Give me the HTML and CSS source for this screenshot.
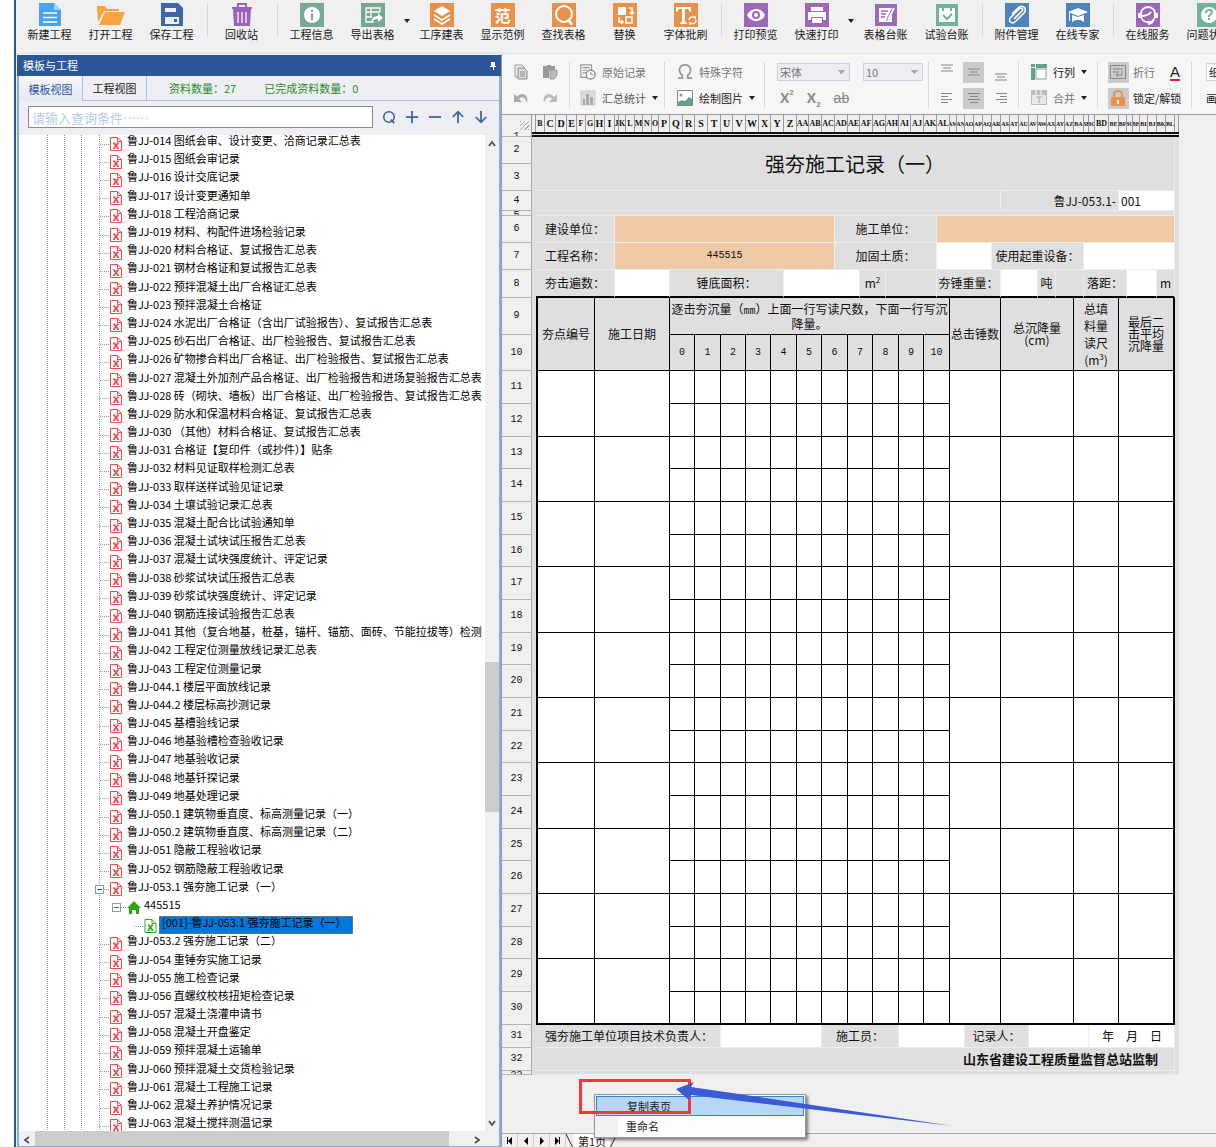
FILE: index.html
```html
<!DOCTYPE html>
<html lang="zh-CN">
<head>
    <meta charset="UTF-8">
    <meta name="viewport" content="width=device-width, initial-scale=1.0">
    <title>强夯施工记录</title>
    <link rel="stylesheet" href="styles.css">
</head>
<body>
    <!-- Icons -->
    <svg class="sprite" aria-hidden="true">
        <symbol id="i-new" viewBox="0 0 24 24"><path fill="#4aa3ef" d="M1 0h15l7 7v16H1z"/><path fill="#a8d3fa" d="M16 0l7 7h-7z"/><path stroke="#fff" stroke-width="1.4" d="M5 10h14M5 14.500h14M5 19h14"/></symbol>
        <symbol id="i-open" viewBox="0 0 28 24"><path fill="#fba33f" d="M0 3h8l2 3h12v2H7L1 19z"/><path fill="#fba33f" d="M8 9h20l-5 13H2z"/></symbol>
        <symbol id="i-save" viewBox="0 0 24 24"><path fill="#3d67ab" d="M1 0h17l5 5v18H1z"/><path fill="#f0f0f0" d="M5 5h11v4H5zM5 14h14v7H5z"/><path fill="#3d67ab" d="M14 16h3v3h-3z"/></symbol>
        <symbol id="i-trash" viewBox="0 0 24 24"><path fill="none" stroke="#9a63b5" stroke-width="2" d="M2 5h20M8 4V1h8v3"/><path fill="#9a63b5" d="M3 6h18l-1 17H4z"/><path stroke="#f0e4f5" stroke-width="1.500" d="M8 9v11M12 9v11M16 9v11"/></symbol>
        <symbol id="i-info" viewBox="0 0 24 24"><path fill="#78a793" d="M0 0h24v24H0z"/><circle cx="12" cy="12" r="8" fill="#fff"/><path stroke="#78a793" stroke-width="2.200" d="M12 10.500V17M12 7v2"/></symbol>
        <symbol id="i-export" viewBox="0 0 24 24"><path fill="#78a793" d="M0 0h24v24H0z"/><path fill="none" stroke="#fff" stroke-width="1.300" d="M19 9V5H5v14h8M5 9h14M5 14h6M10 5v9"/><path fill="#fff" d="M10 19c1-4 3-6 7-6v-3l5 5-5 4v-3c-3 0-5 1-7 3z"/></symbol>
        <symbol id="i-layers" viewBox="0 0 24 24"><path fill="#e8914a" d="M0 0h24v24H0z"/><path fill="#fff" d="M12 3l8 5-8 5-8-5zM4 11l8 5 8-5v2l-8 5-8-5zM4 15l8 5 8-5v2l-8 5-8-5z"/></symbol>
        <symbol id="i-search" viewBox="0 0 24 24"><path fill="#e8914a" d="M0 0h24v24H0z"/><circle cx="12" cy="11" r="8" fill="none" stroke="#fff" stroke-width="2"/><path stroke="#fff" stroke-width="2.400" d="M16 16l4 6"/></symbol>
        <symbol id="i-replace" viewBox="0 0 24 24"><path fill="#e8914a" d="M0 0h24v24H0z"/><path fill="#fff" d="M5 4h8v8H5z"/><path fill="none" stroke="#fff" stroke-width="1.600" d="M13 14h6v6h-6zM16 5h3v6M17 9l2 2 2-2M6 14v5h4M8 17l2 2-2 2"/></symbol>
        <symbol id="i-font" viewBox="0 0 24 24"><path fill="#e8914a" d="M0 0h24v24H0z"/><path fill="#fff" d="M2 4h15v5h-1l-2-3h-3v13l2 1v1H6v-1l2-1V6H5L3 9H2z"/><path fill="none" stroke="#fff" stroke-width="1.400" d="M15 17c0-3 4-4 6-2v-2M22 17c0 4-4 4-6 3v2"/></symbol>
        <symbol id="i-eye" viewBox="0 0 24 24"><path fill="#9b69b8" d="M0 0h24v24H0z"/><path fill="#fff" d="M3 12c4-8 14-8 18 0-4 8-14 8-18 0z"/><circle cx="12" cy="12" r="3" fill="#fff" stroke="#9b69b8" stroke-width="2"/></symbol>
        <symbol id="i-print" viewBox="0 0 24 24"><path fill="#9b69b8" d="M0 0h24v24H0z"/><path fill="#fff" d="M6 4h12v4H6zM3 9h18v8h-3v-3H6v3H3zM7 15h10v5H7z"/></symbol>
        <symbol id="i-form" viewBox="0 0 24 24"><path fill="#9b69b8" d="M1 1h22v22H1z"/><path fill="#fff" d="M5 5h13l-5 10-1 3 3-1 3-6v8H5z"/><path stroke="#9b69b8" stroke-width="1.300" d="M7 8h7M7 11h5M7 14h4"/><path stroke="#fff" stroke-width="2" d="M20 5l-6 12"/></symbol>
        <symbol id="i-test" viewBox="0 0 24 24"><path fill="#6fb39a" d="M1 1h22v22H1z"/><path fill="#fff" d="M4 5h3v3h2V5h6v3h2V5h3v14H4z"/><path fill="none" stroke="#6fb39a" stroke-width="2" d="M8 12l4 4 5-5"/></symbol>
        <symbol id="i-clip" viewBox="0 0 24 24"><path fill="#4c84bb" d="M0 0h24v24H0z"/><path fill="none" stroke="#fff" stroke-width="1.600" d="M9 16l8-8c2-2-1-4-3-2l-8 8c-4 4 1 8 5 4l8-8c4-5-2-9-6-5l-6 6"/></symbol>
        <symbol id="i-expert" viewBox="0 0 24 24"><path fill="#4c84bb" d="M0 0h24v24H0z"/><path fill="#fff" d="M12 5l10 4-10 4L2 9z"/><path fill="#fff" d="M6 12l6 2 6-2v7c-4-3-8-3-12 0zM3 10h1v8H3z"/></symbol>
        <symbol id="i-service" viewBox="0 0 24 24"><path fill="#9b69b8" d="M0 0h24v24H0z"/><path fill="none" stroke="#fff" stroke-width="1.800" d="M5 13C3 1 21 1 19 13c-1 8-13 8-14 0c5 0 8-1 10-4M18 16c-1 3-3 5-6 5"/><path fill="#fff" d="M2 10h3v5H2zM19 10h3v5h-3z"/></symbol>
        <symbol id="i-help" viewBox="0 0 24 24"><path fill="#6fb39a" d="M0 0h24v24H0z"/><circle cx="12" cy="12" r="8" fill="#fff"/><path fill="none" stroke="#6fb39a" stroke-width="2" d="M9 10c0-4 6-4 6-1 0 2-3 2-3 5M12 15v2"/></symbol>
        <symbol id="i-copy" viewBox="0 0 16 16"><path fill="#eee" stroke="#999" d="M2 1h7l2 2v10H2z"/><path fill="#ddd" stroke="#888" d="M5 4h6l3 3v8H5z"/><path stroke="#888" d="M7 8h5M7 10h5M7 12h5"/></symbol>
        <symbol id="i-paste" viewBox="0 0 16 16"><path fill="#999" d="M1 2h4V1h4v1h4v4H7v8H1z"/><path fill="#bbb" stroke="#999" d="M8 6h7v5l-3 4H8z"/></symbol>
        <symbol id="i-undo" viewBox="0 0 16 16"><path fill="#aaa" d="M1 4v8h8L6 9c3-3 6-2 8 4C16 5 9 1 4 7z"/></symbol>
        <symbol id="i-redo" viewBox="0 0 16 16"><path fill="#bbb" d="M15 4v8H7l3-3C7 6 4 7 2 13 0 5 7 1 12 7z"/></symbol>
        <symbol id="i-record" viewBox="0 0 18 18"><path fill="none" stroke="#999" stroke-width="1.300" d="M8 15H1V1h12v6M3 4h8M3 7h5M3 10h4"/><circle cx="12" cy="12" r="5" fill="#f6f6f6" stroke="#888" stroke-width="1.400"/><path fill="none" stroke="#888" d="M12 9v3h3"/></symbol>
        <symbol id="i-stats" viewBox="0 0 16 16"><path fill="#ddd" stroke="#ccc" d="M1 1h14v14H1z"/><path fill="#aaa" d="M3 9h2v6H3zM6 4h3v11H6zM10 7h3v8h-3z"/></symbol>
        <symbol id="i-omega" viewBox="0 0 18 18"><path fill="none" stroke="#999" stroke-width="2" d="M1 16h5v-3C0 8 3 1 9 1s9 7 3 12v3h5"/></symbol>
        <symbol id="i-picture" viewBox="0 0 16 16"><path fill="#fff" stroke="#888" d="M.5.5h15v15H.5z"/><path fill="#5fa38c" d="M1 12l4-2 3 1 4-4 3 2v6H1z"/><circle cx="4" cy="5" r="1.500" fill="#e77b26"/></symbol>
        <symbol id="i-top" viewBox="0 0 12 9"><path stroke="#888" d="M0 1.500h12M2 4.500h8M0 7.500h12"/></symbol>
        <symbol id="i-left" viewBox="0 0 12 12"><path stroke="#888" d="M0 1.500h11M0 4.500h7M0 7.500h11M0 10.500h7"/></symbol>
        <symbol id="i-center" viewBox="0 0 12 12"><path stroke="#888" d="M0 1.500h12M2 4.500h8M0 7.500h12M2 10.500h8"/></symbol>
        <symbol id="i-right" viewBox="0 0 12 12"><path stroke="#888" d="M1 1.500h11M5 4.500h7M1 7.500h11M5 10.500h7"/></symbol>
        <symbol id="i-rowcol" viewBox="0 0 16 16"><path fill="#fff" stroke="#999" d="M5 5h10v10H5z"/><path fill="#5fa38c" d="M0 0h4v3H0zM5 0h11v4H5zM0 4h4v12H0z"/></symbol>
        <symbol id="i-merge" viewBox="0 0 16 16"><path fill="#e8e8e8" stroke="#bbb" d="M.5.5h15v14H.5z"/><path fill="#bbb" d="M0 0h16v5H0z"/><path stroke="#fff" d="M5 0v5M10 0v5"/><path stroke="#aaa" d="M5 7h6M8 7v6"/></symbol>
        <symbol id="i-wrap" viewBox="0 0 16 16"><path fill="none" stroke="#888" d="M.5 1.500h15v13H.5zM3 5h10M3 8h6M12 7v4H6M8 9l-2 2 2 2"/></symbol>
        <symbol id="i-lock" viewBox="0 0 16 16"><path fill="none" stroke="#e8914a" stroke-width="2" d="M4 8V4c0-4 8-4 8 0v4"/><path fill="#e8914a" d="M1 7h14v9H1z"/><path fill="#fff" d="M7 10h2v4H7z"/></symbol>
        <symbol id="i-find" viewBox="0 0 16 16"><circle cx="8" cy="8" r="6" fill="none" stroke="#3b64a5" stroke-width="1.800"/><path stroke="#3b64a5" stroke-width="2" d="M10 11l4 4"/></symbol>
        <symbol id="i-plus" viewBox="0 0 16 16"><path stroke="#3b64a5" stroke-width="2" d="M1 8h14M8 1v14"/></symbol>
        <symbol id="i-minus" viewBox="0 0 16 16"><path stroke="#3b64a5" stroke-width="2" d="M1 8h14"/></symbol>
        <symbol id="i-up" viewBox="0 0 16 16"><path fill="none" stroke="#3b64a5" stroke-width="2" d="M8 15V2M2 8l6-6 6 6"/></symbol>
        <symbol id="i-down" viewBox="0 0 16 16"><path fill="none" stroke="#3b64a5" stroke-width="2" d="M8 1v13M2 8l6 6 6-6"/></symbol>
        <symbol id="i-pin" viewBox="0 0 8 8"><path fill="#fff" d="M2 0h4v4h1v1H5v3H4V5H1V4h1z"/></symbol>
        <symbol id="i-doc" viewBox="0 0 12 14"><path fill="#fff" stroke="currentColor" d="M.5.5h7l4 4v9H.5z"/><path fill="none" stroke="currentColor" d="M7.500.5v4h4"/><path stroke="currentColor" stroke-width="1.800" d="M4 6l4 5M8 6l-4 5"/><path stroke="currentColor" d="M3 6h2M7 6h2M3 11.500h2M7 11.500h2"/></symbol>
        <symbol id="i-home" viewBox="0 0 14 13"><path fill="#2fa60e" d="M7 0l7 7h-2v6H9V9H5v4H2V7H0z"/></symbol>
        <symbol id="i-chev" viewBox="0 0 8 8"><path fill="none" stroke="#555" stroke-width="1.800" d="M1 6l3-4 3 4"/></symbol>
    </svg>

    <div class="app">
        <!-- Main toolbar -->
        <header class="topbar">
            <button><svg><use href="#i-new"/></svg>新建工程</button>
            <button><svg class="wide"><use href="#i-open"/></svg>打开工程</button>
            <button><svg><use href="#i-save"/></svg>保存工程</button>
            <i class="sep"></i>
            <button><svg><use href="#i-trash"/></svg>回收站</button>
            <i class="sep"></i>
            <button><svg><use href="#i-info"/></svg>工程信息</button>
            <button><svg><use href="#i-export"/></svg>导出表格</button>
            <i class="drop"></i>
            <button><svg><use href="#i-layers"/></svg>工序建表</button>
            <button><b class="word-icon">范</b>显示范例</button>
            <button><svg><use href="#i-search"/></svg>查找表格</button>
            <button><svg><use href="#i-replace"/></svg>替换</button>
            <button><svg><use href="#i-font"/></svg>字体批刷</button>
            <i class="sep"></i>
            <button><svg><use href="#i-eye"/></svg>打印预览</button>
            <button><svg><use href="#i-print"/></svg>快速打印</button>
            <i class="drop"></i>
            <button><svg><use href="#i-form"/></svg>表格台账</button>
            <button><svg><use href="#i-test"/></svg>试验台账</button>
            <i class="sep"></i>
            <button><svg><use href="#i-clip"/></svg>附件管理</button>
            <button><svg><use href="#i-expert"/></svg>在线专家</button>
            <i class="sep"></i>
            <button><svg><use href="#i-service"/></svg>在线服务</button>
            <button><svg><use href="#i-help"/></svg>问题状态</button>
        </header>

        <main>
            <!-- Template tree -->
            <aside class="side">
                <div class="side-title">模板与工程<svg><use href="#i-pin"/></svg></div>
                <div class="tabs">
                    <button class="tab active">模板视图</button>
                    <button class="tab">工程视图</button>
                    <span class="count">资料数量：27</span>
                    <span class="count">已完成资料数量：0</span>
                </div>
                <div class="search">
                    <input type="text" placeholder="请输入查询条件……" aria-label="查询条件">
                    <button aria-label="查询"><svg><use href="#i-find"/></svg></button>
                    <button aria-label="展开"><svg><use href="#i-plus"/></svg></button>
                    <button aria-label="收起"><svg><use href="#i-minus"/></svg></button>
                    <button aria-label="上一个"><svg><use href="#i-up"/></svg></button>
                    <button aria-label="下一个"><svg><use href="#i-down"/></svg></button>
                </div>
                <div class="tree-box">
                    <ul class="tree" id="tree"></ul>
                    <div class="vscroll"><svg><use href="#i-chev"/></svg><i></i><svg class="flip"><use href="#i-chev"/></svg></div>
                </div>
                <div class="hscroll"><svg class="turn-left"><use href="#i-chev"/></svg><i></i><svg class="turn-right"><use href="#i-chev"/></svg></div>
            </aside>

            <section class="editor">
                <!-- Edit toolbar -->
                <div class="ribbon">
                    <div class="group clipboard">
                        <div><button aria-label="复制"><svg><use href="#i-copy"/></svg></button><button aria-label="粘贴"><svg><use href="#i-paste"/></svg></button></div>
                        <div><button aria-label="撤销"><svg><use href="#i-undo"/></svg></button><button aria-label="恢复"><svg><use href="#i-redo"/></svg></button></div>
                    </div>
                    <div class="group record-tools">
                        <div><button class="off"><svg><use href="#i-record"/></svg>原始记录</button></div>
                        <div><button class="off dark"><svg><use href="#i-stats"/></svg>汇总统计<i class="drop"></i></button></div>
                    </div>
                    <div class="group symbol">
                        <div><button class="off"><svg><use href="#i-omega"/></svg>特殊字符</button></div>
                        <div><button><svg><use href="#i-picture"/></svg>绘制图片<i class="drop"></i></button></div>
                    </div>
                    <div class="group fonts">
                        <div>
                            <select class="face" aria-label="字体" disabled><option>宋体</option></select>
                            <select class="size" aria-label="字号" disabled><option>10</option></select>
                        </div>
                        <div class="scripts"><button>X<sup>2</sup></button><button>X<sub>2</sub></button><button class="strike">ab</button></div>
                    </div>
                    <div class="group aligns">
                        <div><button class="up" aria-label="顶端对齐"><svg><use href="#i-top"/></svg></button><button class="on" aria-label="垂直居中"><svg><use href="#i-top"/></svg></button><button class="down" aria-label="底端对齐"><svg><use href="#i-top"/></svg></button></div>
                        <div><button aria-label="左对齐"><svg><use href="#i-left"/></svg></button><button class="on" aria-label="居中"><svg><use href="#i-center"/></svg></button><button aria-label="右对齐"><svg><use href="#i-right"/></svg></button></div>
                    </div>
                    <div class="group cells">
                        <div><button><svg><use href="#i-rowcol"/></svg>行列<i class="drop"></i></button></div>
                        <div><button class="off"><svg><use href="#i-merge"/></svg>合并<i class="drop"></i></button></div>
                    </div>
                    <div class="group locks">
                        <div><button class="off"><span class="on"><svg><use href="#i-wrap"/></svg></span>折行</button><button class="color" aria-label="字体颜色">A</button></div>
                        <div><button><span class="on"><svg><use href="#i-lock"/></svg></span>锁定/解锁</button></div>
                    </div>
                    <div class="group lines">
                        <div><select aria-label="线型"><option>细线</option></select></div>
                        <div><button>画线</button></div>
                    </div>
                </div>

                <!-- Sheet -->
                <div class="sheet-area">
                    <table class="sheet" id="sheet"></table>
                </div>

                <div class="pager">
                    <button aria-label="第一页"><i class="bar"></i><i class="prev"></i></button>
                    <button aria-label="上一页"><i class="prev"></i></button>
                    <button aria-label="下一页"><i class="next"></i></button>
                    <button aria-label="最后一页"><i class="next"></i><i class="bar"></i></button>
                    <svg class="slash" viewBox="0 0 8 14"><path stroke="#222" d="M0 0l7 14"/></svg>
                    <button class="page">第1页</button>
                    <svg class="slash" viewBox="0 0 8 14"><path stroke="#222" d="M7 0L0 14"/></svg>
                </div>

                <!-- Page menu and the marks over it -->
                <div class="menu">
                    <button class="active">复制表页</button>
                    <button>重命名</button>
                </div>
                <div class="mark"></div>
                <svg class="arrow" viewBox="0 0 280 46"><path fill="#3b5bd6" d="M0 8L18 1l-3 5 262 39L15 14l-2 5z"/></svg>
            </section>
        </main>
    </div>
    <script src="script.js"></script>
</body>
</html>
```
FILE: styles.css
```css
* {
    box-sizing: border-box;
}

html, body {
    height: 100%;
}

body {
    margin: 0;
    background: #fff;
    font-family: "Noto Sans CJK SC", sans-serif;
    font-size: 11px;
    color: #1a1a1a;
    overflow: hidden;
}

button {
    border: none;
    background: none;
    padding: 0;
    font: inherit;
    color: inherit;
    white-space: nowrap;
}

.sprite {
    display: none;
}

.app {
    height: 100%;
    margin-left: 14px;
    border-left: 2px solid #2b579a;
    background: #f0f0f0;
    display: flex;
    flex-direction: column;
}

.drop {
    flex: none;
    border: 3px solid transparent;
    border-top: 4px solid #222;
    border-bottom: none;
}

/* main toolbar */
.topbar {
    display: flex;
    height: 54px;
    padding: 3px 0 0 3px;
    overflow: hidden;
    border-bottom: 1px solid #e2e2ea;
}

.topbar button {
    flex: none;
    width: 61px;
    display: flex;
    flex-direction: column;
    align-items: center;
    line-height: 14px;
}

.topbar svg, .word-icon {
    width: 24px;
    height: 24px;
}

.topbar .wide {
    width: 28px;
}

.word-icon {
    background: #e8914a;
    color: #fff;
    font-size: 16px;
    line-height: 24px;
    text-align: center;
}

.topbar .sep {
    flex: none;
    width: 9px;
    height: 34px;
    background: linear-gradient(#d8d8d8, #d8d8d8) 5px 0 / 1px 100% no-repeat;
}

.topbar .drop {
    margin: 16px 1px 0 1px;
    height: 4px;
}

main {
    flex: 1;
    min-height: 0;
    display: flex;
}

/* left panel */
.side {
    flex: none;
    width: 484px;
    display: flex;
    flex-direction: column;
    border: 2px solid #85ace6;
    border-top: none;
    border-bottom-width: 1px;
    margin-left: 1px;
    margin-top: 1px;
    background: #eeeef3;
}

.side-title {
    height: 21px;
    line-height: 21px;
    padding: 0 4px 0 6px;
    margin: 0 -2px;
    background: #2b579a;
    color: #fff;
    display: flex;
    justify-content: space-between;
    align-items: center;
}

.side-title svg {
    width: 8px;
    height: 8px;
}

.tabs {
    display: flex;
    height: 25px;
    line-height: 24px;
    border-bottom: 1px solid #a5c3ee;
}

.tab {
    width: 64px;
    border-right: 1px solid #a5c3ee;
}

.tab.active {
    color: #2b579a;
    background: linear-gradient(#f6f6fa, #e6e8f0);
    height: 25px;
}

.count {
    margin-left: 22px;
    color: #1f8f1f;
}

.count + .count {
    margin-left: 28px;
}

.search {
    display: flex;
    align-items: center;
    gap: 7px;
    height: 34px;
    padding: 0 10px 2px 9px;
}

.search input {
    flex: 1;
    min-width: 0;
    height: 22px;
    margin-right: 1px;
    padding: 0 3px;
    border: 1px solid #8a8a8a;
    background: #fff;
    font: 13px "Noto Sans CJK SC", sans-serif;
    outline: none;
}

.search input::placeholder {
    color: #b3cce8;
}

.search button {
    width: 16px;
    height: 16px;
}

.search svg {
    display: block;
    width: 14px;
    height: 14px;
    margin: auto;
}

.tree-box {
    flex: 1;
    min-height: 0;
    display: flex;
    background: #fff;
    overflow: hidden;
}

.tree {
    --dots: repeating-linear-gradient(#999 0 1px, transparent 1px 2px);
    flex: 1;
    min-width: 0;
    margin: -4px 0 0;
    padding: 0;
    list-style: none;
    display: flex;
    flex-direction: column;
    overflow: hidden;
    background: var(--dots) 28px 0 / 1px 100% no-repeat,
        var(--dots) 45px 0 / 1px 100% no-repeat,
        var(--dots) 62px 0 / 1px 100% no-repeat,
        var(--dots) 80px 0 / 1px 100% no-repeat;
}

.tree li {
    flex: 1;
    min-height: 0;
    display: flex;
    align-items: center;
    padding-left: 81px;
    white-space: pre;
    line-height: 18px;
    color: #000;
}

.tree svg {
    flex: none;
    width: 12px;
    height: 14px;
    margin: 7px 5px 0 0;
    color: #f0494c;
}

.tree .link {
    flex: none;
    width: 10px;
    height: 1px;
    margin-top: 8px;
    background: repeating-linear-gradient(90deg, #999 0 1px, transparent 1px 2px);
}

.tree .toggle {
    flex: none;
    width: 9px;
    height: 9px;
    margin: 8px 0 0 -5px;
    border: 1px solid #999;
    background: linear-gradient(#3b5fb5, #3b5fb5) center / 5px 1px no-repeat #fff;
}

.tree .toggle + .link {
    width: 6px;
}

.tree .project {
    padding-left: 98px;
}

.tree .project svg {
    width: 14px;
    height: 13px;
    margin-right: 3px;
}

.tree .record {
    padding-left: 115px;
}

.tree .record svg {
    color: #3aa022;
    width: 13px;
    margin-right: 2px;
}

.tree .record span {
    align-self: stretch;
    margin: 3px 0 -3px;
    padding: 0 6px 0 3px;
    line-height: 12px;
    background: #0078d7;
    outline: 1px dotted #c8702a;
    outline-offset: -1px;
}

.vscroll {
    flex: none;
    width: 14px;
    background: #f0f0f0;
    display: grid;
    grid-template-rows: 527px 150px 1fr;
    justify-items: center;
}

.vscroll svg, .hscroll svg {
    width: 8px;
    height: 8px;
    margin-top: 5px;
}

.vscroll i {
    width: 14px;
    background: #cdcdcd;
}

.vscroll .flip {
    align-self: end;
    margin-bottom: 4px;
    transform: rotate(180deg);
}

.hscroll {
    flex: none;
    height: 15px;
    padding: 0 18px 0 4px;
    background: #f0f0f0;
    display: flex;
    gap: 4px;
}

.hscroll i {
    flex: 1;
    background: #cdcdcd;
    margin-right: 20px;
}

.turn-left {
    transform: rotate(-90deg);
}

.turn-right {
    transform: rotate(90deg);
}

/* right part */
.editor {
    flex: 1;
    min-width: 0;
    position: relative;
    display: flex;
    flex-direction: column;
    border-left: 1px solid #9c9c9c;
}

.ribbon {
    height: 61px;
    display: flex;
    background: #f6f6f6;
    border-bottom: 1px solid #9c9c9c;
    overflow: hidden;
    color: #222;
}

.group {
    flex: none;
    margin: 5px 0 3px;
    display: grid;
    grid-template-rows: 26px 26px;
    align-items: center;
    background: linear-gradient(#d8d8d8, #d8d8d8) right 3px / 1px 46px no-repeat;
}

.group > div {
    display: flex;
    align-items: center;
}

.group button {
    display: flex;
    align-items: center;
    gap: 6px;
    height: 21px;
}

.group svg {
    width: 16px;
    height: 16px;
}

.off {
    color: #777;
}

.off.dark {
    color: #555;
}

.clipboard {
    width: 68px;
    padding-left: 11px;
}

.clipboard > div {
    gap: 13px;
}

.record-tools {
    width: 95px;
    padding-left: 10px;
}

.symbol {
    width: 100px;
    padding-left: 12px;
}

.fonts {
    width: 164px;
    padding-left: 12px;
}

.fonts > div {
    gap: 13px;
}

.fonts select, .lines select {
    height: 18px;
    border: 1px solid #cfcfe0;
    color: #777;
    font: 11px "Noto Sans CJK SC", sans-serif;
    padding: 0 2px;
    appearance: none;
    opacity: 1;
}

.fonts select {
    background: conic-gradient(from -45deg at 50% 100%, #aaa 90deg, transparent 0) right 4px center / 8px 4px no-repeat #eeeef2;
}

.face {
    width: 73px;
}

.size {
    width: 60px;
}

.fonts .scripts {
    font: bold 14px "Liberation Sans", sans-serif;
    color: #888;
    padding-left: 3px;
}

.scripts button {
    gap: 0;
}

.scripts sup, .scripts sub {
    font-size: 8px;
    align-self: flex-start;
}

.scripts sub {
    align-self: flex-end;
}

.scripts .strike {
    font-weight: normal;
    text-decoration: line-through;
}

.aligns {
    width: 90px;
    padding-left: 7px;
}

.aligns > div {
    gap: 6px;
}

.aligns button {
    width: 21px;
    justify-content: center;
}

.aligns svg {
    width: 12px;
    height: 12px;
}

.aligns .up {
    align-items: flex-start;
}

.aligns .down {
    align-items: flex-end;
}

.on {
    background: #cbcbcb;
}

span.on {
    width: 21px;
    height: 21px;
    padding: 2px;
}

span.on svg {
    display: block;
}

.cells {
    width: 79px;
    padding-left: 12px;
}

.locks {
    width: 94px;
    padding-left: 10px;
}

.locks button {
    gap: 4px;
}

.locks > div {
    gap: 15px;
}

.locks .color {
    font: 15px/15px "Liberation Sans", sans-serif;
    height: 17px;
    border-bottom: 2px solid #ed1c24;
}

.lines {
    width: 80px;
    padding-left: 14px;
}

.lines select {
    width: 60px;
    background: #fff;
    color: #222;
}

.sheet-area {
    flex: 1;
    min-height: 0;
    overflow: hidden;
}

.sheet {
    table-layout: fixed;
    border-collapse: separate;
    border-spacing: 0;
    width: 677px;
    font-size: 12px;
    line-height: 12px;
    color: #111;
}

.sheet th, .sheet td {
    padding: 0;
    text-align: center;
    font-weight: normal;
}

.sheet td {
    background: #dfdfdf;
    border-right: 1px solid #ececec;
    border-bottom: 1px solid #ececec;
}

.sheet thead th {
    height: 17px;
    font: bold 10px "Liberation Serif", serif;
    border-right: 1px solid #999;
    overflow: hidden;
    white-space: nowrap;
}

.sheet thead .double {
    font-size: 8px;
}

.sheet thead .narrow {
    font-size: 6px;
}

.sheet thead div {
    display: flex;
    justify-content: center;
    overflow: hidden;
}

.sheet .corner {
    background: repeating-linear-gradient(135deg, #aaa 0 1px, transparent 1px 3px) right 2px bottom 2px / 9px 9px no-repeat;
}

.sheet .num {
    font: 10px/10px "Liberation Mono", monospace;
    border-right: 1px solid #aaa;
    border-bottom: 1px solid #b5b5b5;
}

.sheet .num div {
    overflow: hidden;
}

.sheet td.gap {
    border-right: none;
    border-bottom-color: #dfdfdf;
}

.sheet td.select, .sheet .picked .gap {
    border-top: 2px solid #111;
    border-bottom: 2px solid #111;
    border-right: none;
}

.sheet td.white {
    background: #fff;
}

.sheet td.orange {
    background: #f0c9a6;
}

.sheet td.number, .sheet .unit {
    font: 10px/12px "Liberation Mono", monospace;
}

.sheet td.title {
    font-size: 20px;
    line-height: 24px;
}

.sheet td.right {
    text-align: right;
    padding-right: 2px;
}

.sheet td.left {
    text-align: left;
    padding-left: 2px;
}

.sheet td.indent {
    text-align: left;
    padding-left: 9px;
}

.sheet td.org {
    text-align: right;
    padding-right: 16px;
    font-size: 13px;
    font-weight: bold;
}

.sheet td.date {
    text-align: right;
    padding-right: 12px;
}

.sheet td.line {
    border-right: 1px solid #000;
    border-bottom: 1px solid #000;
}

.sheet td.loose {
    line-height: 17px;
}

.sheet td.first {
    border-left: 2px solid #000;
}

.sheet td.last {
    border-right: 2px solid #000;
}

.sheet .over td:not(.gap) {
    border-bottom: 2px solid #000;
}

.sheet .end td.line, .sheet td.end {
    border-bottom: 2px solid #000;
}

.sheet sup {
    font-size: 8px;
    line-height: 0;
}

/* page tabs */
.pager {
    flex: none;
    height: 14px;
    border-top: 1px solid #aaa;
    display: flex;
    background: #f0f0f0;
    overflow: hidden;
}

.pager button {
    width: 16px;
    display: flex;
    align-items: center;
    justify-content: center;
    border-right: 1px solid #ccc;
}

.pager .bar {
    width: 1px;
    height: 7px;
    background: #000;
}

.pager .prev, .pager .next {
    border: 4px solid transparent;
    border-right-color: #000;
    border-left: none;
}

.pager .next {
    border-right: none;
    border-left: 4px solid #000;
}

.slash {
    width: 8px;
    height: 14px;
}

.pager .page {
    width: 36px;
    background: #fff;
    border: none;
    line-height: 14px;
}

.menu {
    position: absolute;
    left: 92px;
    bottom: 9px;
    width: 212px;
    padding: 1px;
    background: linear-gradient(90deg, #f1f1f1 23px, #fdfdfd 23px);
    border: 1px solid #999;
    box-shadow: 2px 2px 3px rgba(0, 0, 0, 0.5);
}

.menu button {
    display: block;
    width: 100%;
    height: 20px;
    line-height: 18px;
    padding-left: 30px;
    text-align: left;
}

.menu .active {
    background: #b5d7f3;
    border: 1px solid #2a8ad8;
}

.mark {
    position: absolute;
    left: 77px;
    bottom: 33px;
    width: 112px;
    height: 35px;
    border: 3px solid #fa3535;
}

.arrow {
    position: absolute;
    left: 174px;
    bottom: 20px;
    width: 280px;
    height: 46px;
}
```
FILE: script.js
```js
// Templates in the tree
const templates = [
    '鲁JJ-014 图纸会审、设计变更、洽商记录汇总表',
    '鲁JJ-015 图纸会审记录',
    '鲁JJ-016 设计交底记录',
    '鲁JJ-017 设计变更通知单',
    '鲁JJ-018 工程洽商记录',
    '鲁JJ-019 材料、构配件进场检验记录',
    '鲁JJ-020 材料合格证、复试报告汇总表',
    '鲁JJ-021 钢材合格证和复试报告汇总表',
    '鲁JJ-022 预拌混凝土出厂合格证汇总表',
    '鲁JJ-023 预拌混凝土合格证',
    '鲁JJ-024 水泥出厂合格证（含出厂试验报告）、复试报告汇总表',
    '鲁JJ-025 砂石出厂合格证、出厂检验报告、复试报告汇总表',
    '鲁JJ-026 矿物掺合料出厂合格证、出厂检验报告、复试报告汇总表',
    '鲁JJ-027 混凝土外加剂产品合格证、出厂检验报告和进场复验报告汇总表',
    '鲁JJ-028 砖（砌块、墙板）出厂合格证、出厂检验报告、复试报告汇总表',
    '鲁JJ-029 防水和保温材料合格证、复试报告汇总表',
    '鲁JJ-030 （其他）材料合格证、复试报告汇总表',
    '鲁JJ-031 合格证【复印件（或抄件）】贴条',
    '鲁JJ-032 材料见证取样检测汇总表',
    '鲁JJ-033 取样送样试验见证记录',
    '鲁JJ-034 土壤试验记录汇总表',
    '鲁JJ-035 混凝土配合比试验通知单',
    '鲁JJ-036 混凝土试块试压报告汇总表',
    '鲁JJ-037 混凝土试块强度统计、评定记录',
    '鲁JJ-038 砂浆试块试压报告汇总表',
    '鲁JJ-039 砂浆试块强度统计、评定记录',
    '鲁JJ-040 钢筋连接试验报告汇总表',
    '鲁JJ-041 其他（复合地基，桩基，锚杆、锚筋、面砖、节能拉拔等）检测',
    '鲁JJ-042 工程定位测量放线记录汇总表',
    '鲁JJ-043 工程定位测量记录',
    '鲁JJ-044.1 楼层平面放线记录',
    '鲁JJ-044.2 楼层标高抄测记录',
    '鲁JJ-045 基槽验线记录',
    '鲁JJ-046 地基验槽检查验收记录',
    '鲁JJ-047 地基验收记录',
    '鲁JJ-048 地基钎探记录',
    '鲁JJ-049 地基处理记录',
    '鲁JJ-050.1 建筑物垂直度、标高测量记录（一）',
    '鲁JJ-050.2 建筑物垂直度、标高测量记录（二）',
    '鲁JJ-051 隐蔽工程验收记录',
    '鲁JJ-052 钢筋隐蔽工程验收记录',
    '鲁JJ-053.1 强夯施工记录（一）',
    '445515',
    '[001]-鲁JJ-053.1 强夯施工记录（一）',
    '鲁JJ-053.2 强夯施工记录（二）',
    '鲁JJ-054 重锤夯实施工记录',
    '鲁JJ-055 施工检查记录',
    '鲁JJ-056 直螺纹校核扭矩检查记录',
    '鲁JJ-057 混凝土浇灌申请书',
    '鲁JJ-058 混凝土开盘鉴定',
    '鲁JJ-059 预拌混凝土运输单',
    '鲁JJ-060 预拌混凝土交货检验记录',
    '鲁JJ-061 混凝土工程施工记录',
    '鲁JJ-062 混凝土养护情况记录',
    '鲁JJ-063 混凝土搅拌测温记录'
];

document.getElementById('tree').innerHTML = templates.map(name => {
    let type = '';
    let icon = 'doc';
    let toggle = '';
    if (name === '445515') {
        type = 'project';
        icon = 'home';
    } else if (name.startsWith('[')) {
        type = 'record';
    }
    if (type === 'project' || name.includes('053.1 ') && !type) {
        toggle = '<i class="toggle"></i>';
    }
    return `<li class="${type}">${toggle}<i class="link"></i><svg><use href="#i-${icon}"/></svg><span>${name}</span></li>`;
}).join('');

// Column widths, B to BL
const widths = [9, 11, 11, 10, 9, 9, 10, 10, 4, 7, 9, 8, 9, 7, 11, 13, 12, 13, 13, 12, 13, 13, 12, 13, 13,
    12, 13, 13, 13, 12, 13, 13, 13, 12, 13, 13, 13, 7, 8, 9, 9, 9, 9, 9, 9, 10, 9, 9, 9, 9, 9,
    10, 5, 6, 14, 10, 8, 6, 7, 8, 9, 9, 9];

function letter(i) {
    const high = Math.floor(i / 26);
    return (high ? String.fromCharCode(64 + high) : '') + String.fromCharCode(65 + i % 26);
}

function letterClass(name, width) {
    if (name.length === 1) {
        return width < 10 ? 'double' : '';
    }
    return width > 11 ? 'double' : 'narrow';
}

function col(name) {
    return name.split('').reduce((sum, c) => sum * 26 + c.charCodeAt(0) - 64, 0);
}

// A cell is [first column, last column, class, text, rowspan]
function buildRow(number, height, cells, rowClass) {
    let html = `<tr class="${rowClass || ''}" style="height:${height}px"><th class="num"><div style="height:${Math.min(height - 1, 10)}px">${number}</div></th><td class="gap"></td>`;
    cells.forEach(([from, to, cls, text, span]) => {
        html += `<td colspan="${col(to) - col(from) + 1}" rowspan="${span || 1}" class="${cls}">${text || ''}</td>`;
    });
    return html + '<td class="gap"></td></tr>';
}

// The eleven reading columns, two letters each
const readings = [['Q', 'R'], ['S', 'T'], ['U', 'V'], ['W', 'X'], ['Y', 'Z'], ['AA', 'AB'], ['AC', 'AD'],
    ['AE', 'AF'], ['AG', 'AH'], ['AI', 'AJ'], ['AK', 'AL']];

let html = '<colgroup><col style="width:30px"><col style="width:4px">';
widths.forEach(w => html += `<col style="width:${w}px">`);
html += '<col style="width:4px"></colgroup><thead><tr><th class="corner"></th><th></th>';
widths.forEach((w, i) => html += `<th class="${letterClass(letter(i + 1), w)}"><div>${letter(i + 1)}</div></th>`);
html += '<th></th></tr></thead><tbody>';

html += buildRow(1, 5, [['B', 'BL', 'select']], 'picked');
html += buildRow(2, 27, [['B', 'BL', 'title', '强夯施工记录（一）', 2]]);
html += buildRow(3, 27, []);
html += buildRow(4, 20, [['B', 'AR', ''], ['AS', 'BE', 'right', '鲁JJ-053.1-'], ['BF', 'BL', 'white left', '001']]);
html += buildRow(5, 5, [['B', 'BL', '']]);
html += buildRow(6, 27, [['B', 'I', '', '建设单位：'], ['J', 'AC', 'orange'], ['AD', 'AK', '', '施工单位：'], ['AL', 'BL', 'orange']]);
html += buildRow(7, 27, [['B', 'I', '', '工程名称：'], ['J', 'AC', 'orange number', '445515'], ['AD', 'AK', '', '加固土质：'],
    ['AL', 'AQ', 'white'], ['AR', 'BA', '', '使用起重设备：'], ['BB', 'BL', 'white']]);
html += buildRow(8, 28, [['B', 'I', '', '夯击遍数：'], ['J', 'P', 'white'], ['Q', 'Y', '', '锤底面积：'], ['Z', 'AE', 'white'],
    ['AF', 'AG', '', 'm<sup>2</sup>'], ['AH', 'AK', ''], ['AL', 'AR', '', '夯锤重量：'], ['AS', 'AV', 'white'],
    ['AW', 'AX', '', '吨'], ['AY', 'BA', ''], ['BB', 'BF', '', '落距：'], ['BG', 'BJ', 'white'], ['BK', 'BL', '', 'm']], 'over');

html += buildRow(9, 37, [['B', 'G', 'line first', '夯点编号', 2], ['H', 'P', 'line', '施工日期', 2],
    ['Q', 'AL', 'line', '逐击夯沉量（<span class="unit">mm</span>）上面一行写读尺数，下面一行写沉<br>降量。'], ['AM', 'AR', 'line', '总击锤数', 2],
    ['AS', 'AZ', 'line', '总沉降量<br>(cm)', 2], ['BA', 'BE', 'line loose', '总填<br>料量<br>读尺<br>(m<sup>3</sup>)', 2],
    ['BF', 'BL', 'line last', '最后二<br>击平均<br>沉降量', 2]]);
html += buildRow(10, 36, readings.map(([a, b], i) => [a, b, 'line number', String(i)]));

// Empty readings, two lines for each point
for (let n = 11; n <= 30; n++) {
    const inner = readings.map(([a, b]) => [a, b, 'line white']);
    const end = n >= 29 ? ' end' : '';
    const height = (n - 10) % 3 === 0 ? 32 : 33;
    if (n % 2) {
        html += buildRow(n, height, [['B', 'G', 'line white first' + end, '', 2], ['H', 'P', 'line white' + end, '', 2], ...inner,
            ['AM', 'AR', 'line white' + end, '', 2], ['AS', 'AZ', 'line white' + end, '', 2],
            ['BA', 'BE', 'line white' + end, '', 2], ['BF', 'BL', 'line white last' + end, '', 2]]);
    } else {
        html += buildRow(n, height, inner, end);
    }
}

html += buildRow(31, 23, [['B', 'T', 'indent', '强夯施工单位项目技术负责人：'], ['U', 'AB', 'white'], ['AC', 'AH', '', '施工员：'],
    ['AI', 'AN', 'white'], ['AO', 'AU', '', '记录人：'], ['AV', 'BB', 'white'], ['BC', 'BL', 'white date', '年　月　日']]);
html += buildRow(32, 23, [['B', 'BL', 'org', '山东省建设工程质量监督总站监制']]);
html += buildRow(33, 4, [['B', 'BL', '']]);
document.getElementById('sheet').innerHTML = html + '</tbody>';
```
